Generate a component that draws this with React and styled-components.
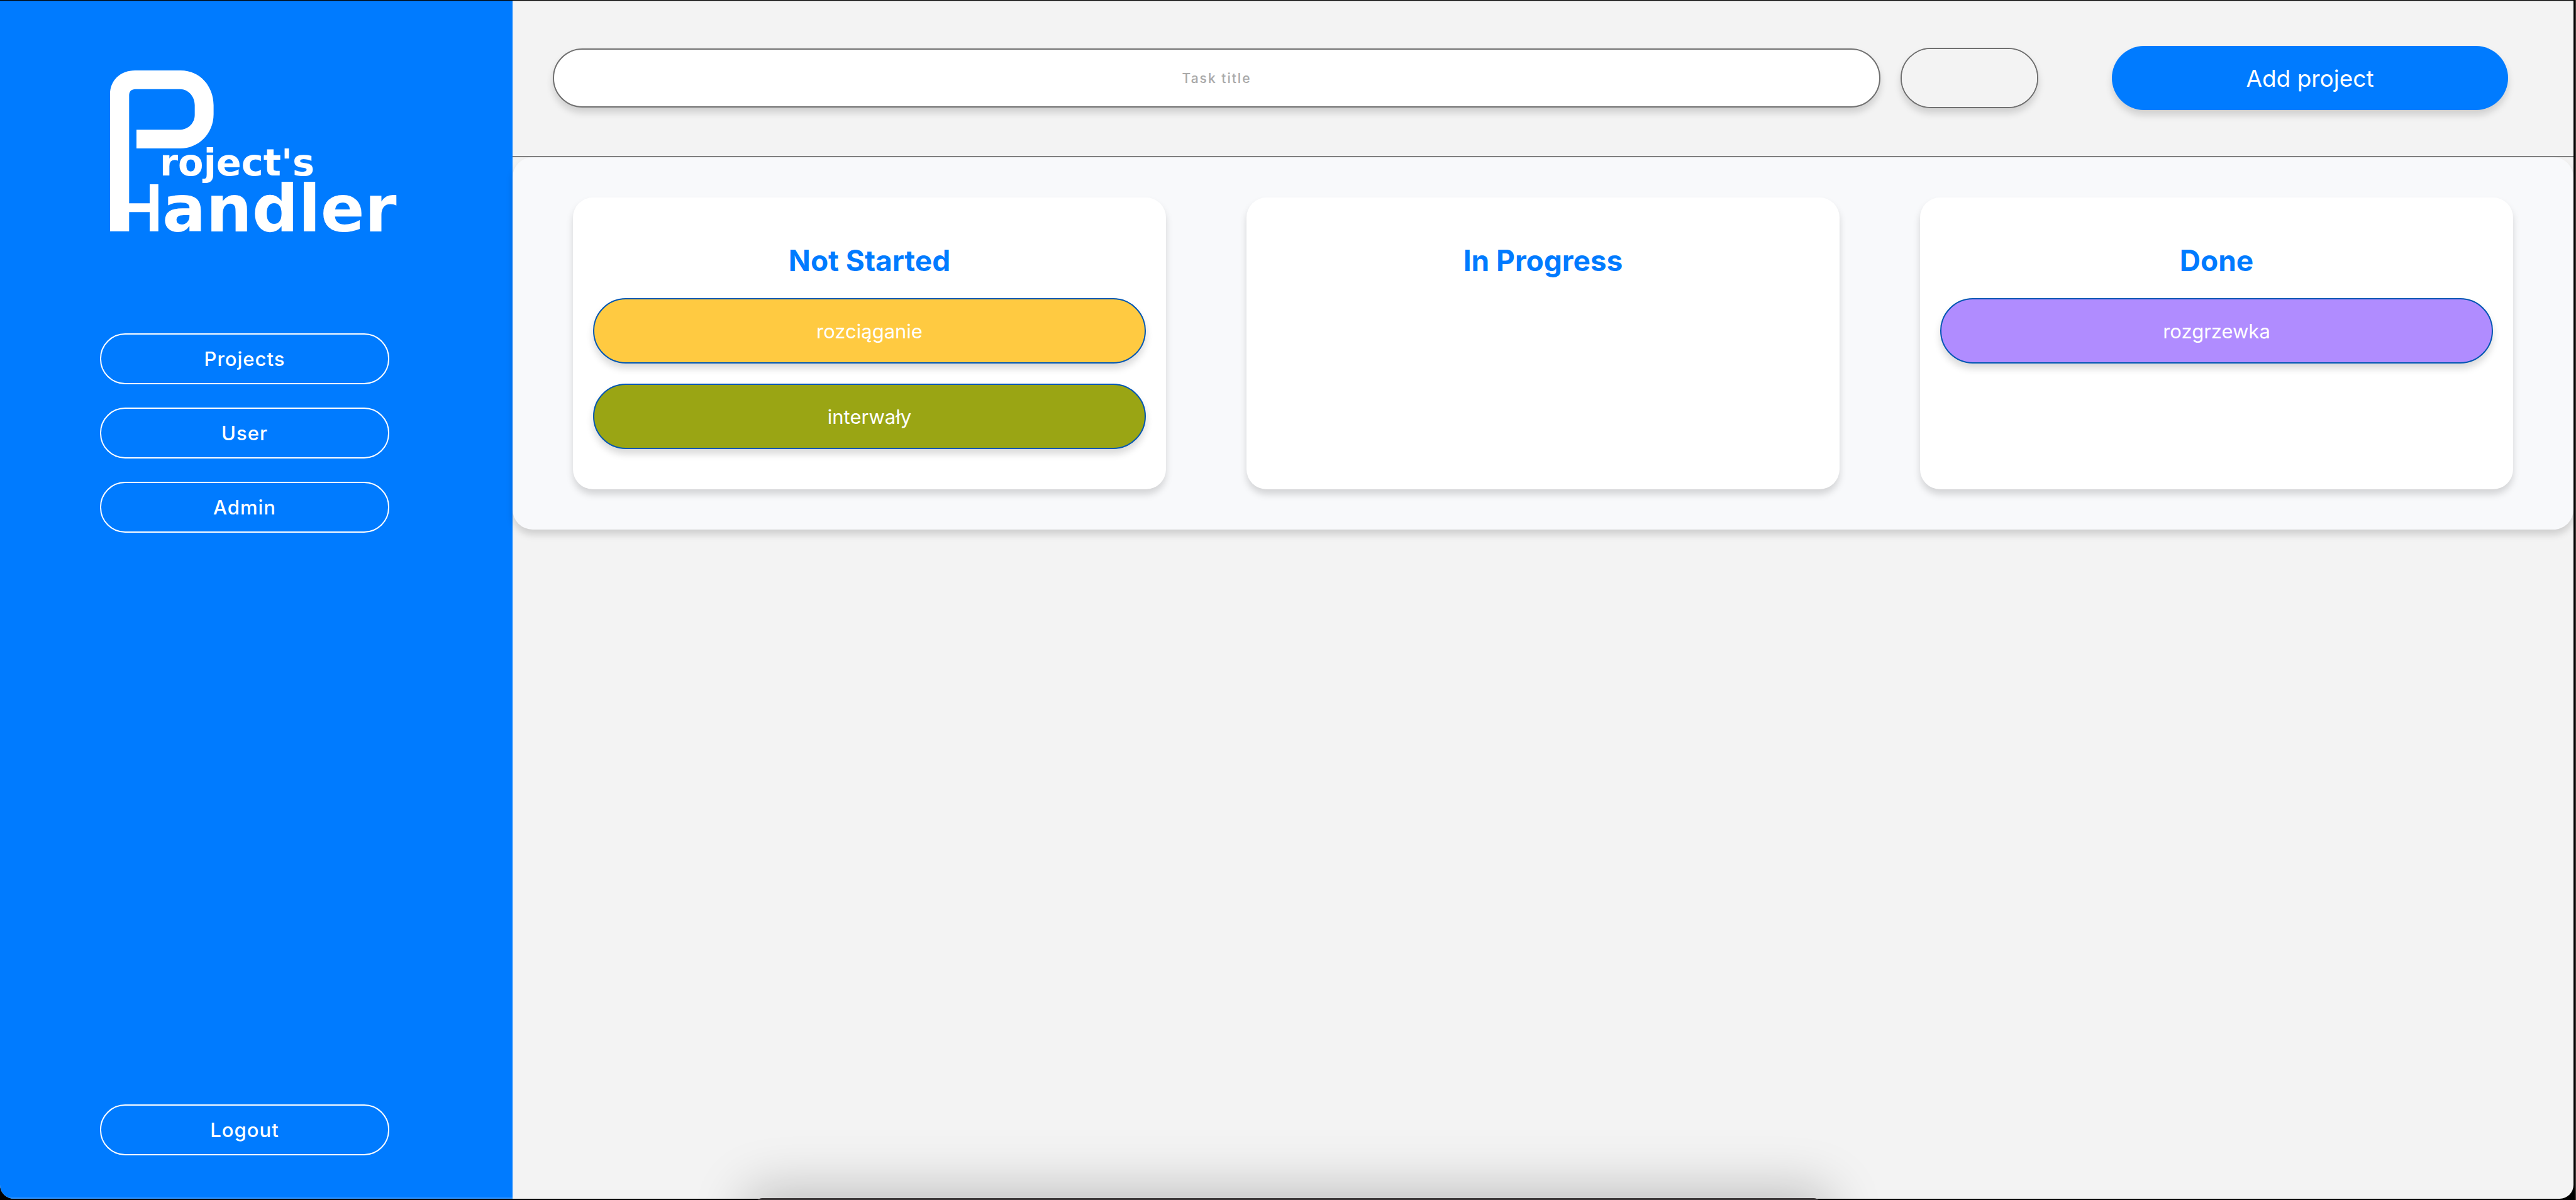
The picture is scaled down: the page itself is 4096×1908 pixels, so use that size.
import React from "react";
import styled, { createGlobalStyle } from "styled-components";

const blue = "#007bff";
const softShadow = "0 8px 12px rgba(0, 0, 0, 0.15)";

const GlobalStyle = createGlobalStyle`
  *, *::before, *::after { box-sizing: border-box; }
  body {
    margin: 0;
    background: #000;
    font-family: Inter, "Liberation Sans", sans-serif;
    -webkit-font-smoothing: antialiased;
  }
  button, input { font-family: inherit; }
`;

const Desktop = styled.div`
  display: flex;
  min-height: 100vh;
  padding: 1px 4px 2px 0;
  background: #000;
  box-shadow: inset -2px 0 0 #38332f;
  overflow: hidden;
`;

const Window = styled.div`
  display: flex;
  flex: 1;
  min-width: 0;
  border-radius: 0 0 22px 22px;
  background: #f3f3f3;
  overflow: hidden;
`;

const Sidebar = styled.aside`
  display: flex;
  flex: 0 0 815px;
  flex-direction: column;
  justify-content: space-between;
  padding: 110px 176px 67px 159px;
  border-top: 1px solid #005fc4;
  border-bottom: 2px solid #3395ff;
  background: ${blue};
`;

const LogoLink = styled.a`
  display: block;
  margin: 0 0 128px 16px;
  line-height: 0;
`;

const LogoText = styled.text`
  font-family: "DejaVu Sans", sans-serif;
  font-weight: 700;
  font-size: ${({ $size }) => $size}px;
  fill: #fff;
`;

const Nav = styled.nav`
  display: flex;
  flex-direction: column;
  gap: 37px;
`;

const NavButton = styled.button`
  width: 460px;
  height: 81px;
  padding: 0;
  border: 2px solid #fff;
  border-radius: 40px;
  background: transparent;
  color: #fff;
  font-size: 31px;
  font-weight: 500;
  letter-spacing: 1px;
  cursor: pointer;
`;

const Main = styled.main`
  flex: 1;
  min-width: 0;
  border-top: 1px solid #b0b0b0;
`;

const Toolbar = styled.form`
  display: flex;
  align-items: center;
  height: 248px;
  padding: 0 104px 2px 64px;
  border-bottom: 2px solid #7f7f7f;
`;

const TitleInput = styled.input`
  flex: 1;
  min-width: 0;
  height: 94px;
  margin-right: 32px;
  padding: 0 32px;
  border: 2px solid #707070;
  border-radius: 47px;
  background: #fff;
  box-shadow: ${softShadow};
  color: #333;
  font-size: 21px;
  font-weight: 500;
  letter-spacing: 2px;
  text-align: center;
  &::placeholder { color: #a9a9a9; opacity: 1; }
`;

const ColorInput = styled.input`
  appearance: none;
  width: 219px;
  height: 96px;
  margin-right: 117px;
  padding: 0;
  border: 2px solid #707070;
  border-radius: 48px;
  background: #f3f3f3;
  box-shadow: ${softShadow};
  overflow: hidden;
  &::-webkit-color-swatch-wrapper { padding: 0; }
  &::-webkit-color-swatch { border: 0; }
`;

const AddButton = styled.button`
  width: 630px;
  height: 102px;
  padding: 0;
  border: 0;
  border-radius: 51px;
  background: ${blue};
  box-shadow: ${softShadow};
  color: #fff;
  font-size: 37px;
  cursor: pointer;
`;

const Board = styled.section`
  display: flex;
  gap: 128px;
  padding: 64px 96px;
  border-radius: 32px;
  background: #f8f9fb;
  box-shadow: ${softShadow};
`;

const Column = styled.section`
  display: flex;
  flex: 1 1 0;
  flex-direction: column;
  min-width: 0;
  padding: 64px 32px;
  border-radius: 32px;
  background: #fff;
  box-shadow: ${softShadow};
`;

const ColumnTitle = styled.h2`
  margin: 0 0 24px;
  color: ${blue};
  font-size: 46px;
  font-weight: 700;
  line-height: 72px;
  text-align: center;
`;

const TaskList = styled.div`
  display: flex;
  flex-direction: column;
  gap: 32px;
`;

const TaskButton = styled.button`
  height: 104px;
  padding: 0;
  border: 2px solid #0056b3;
  border-radius: 52px;
  background: ${({ $color }) => $color};
  box-shadow: ${softShadow};
  color: #fff;
  font-size: 31px;
  cursor: pointer;
`;

const Dock = styled.div`
  position: fixed;
  bottom: -157px;
  left: 29.3%;
  right: 29.3%;
  height: 160px;
  border-radius: 12px;
  background: #3a3637;
  box-shadow: 0 0 84px 14px rgba(0, 0, 0, 0.22);
  pointer-events: none;
`;

const columns = [
  {
    title: "Not Started",
    tasks: [
      { name: "rozciąganie", color: "#ffca41" },
      { name: "interwały", color: "#9aa514" },
    ],
  },
  { title: "In Progress", tasks: [] },
  { title: "Done", tasks: [{ name: "rozgrzewka", color: "#b08cff" }] },
];

function Logo() {
  return (
    <svg width="464" height="290" viewBox="0 0 464 290" role="img" aria-label="Project's Handler">
      {/* Linked monogram: tall rounded loop with a crossbar and a short post */}
      <g transform="scale(0.3444 0.3333) translate(-102 -96)">
        <path
          fill="#fff"
          d="M102 863V210C102 142 150 96 218 96H428C518 96 580 172 580 262V305C580 396 512 468 425 468H224V379H420C464 379 493 346 493 308V262C493 220 464 185 425 185H220C200 185 190 195 190 215V730H285V639H325V863H285V772H190V863Z"
        />
      </g>
      <LogoText $size={59} x="79" y="167">roject's</LogoText>
      <LogoText $size={103} x="83" y="256">andler</LogoText>
    </svg>
  );
}

export default function App() {
  return (
    <>
      <GlobalStyle />
      <Desktop>
        <Window>
          <Sidebar>
            <div>
              <LogoLink href="#">
                <Logo />
              </LogoLink>
              <Nav>
                <NavButton type="button">Projects</NavButton>
                <NavButton type="button">User</NavButton>
                <NavButton type="button">Admin</NavButton>
              </Nav>
            </div>
            <NavButton type="button">Logout</NavButton>
          </Sidebar>
          <Main>
            <Toolbar onSubmit={(e) => e.preventDefault()}>
              <TitleInput type="text" placeholder="Task title" aria-label="Task title" />
              <ColorInput type="color" defaultValue="#f3f3f3" aria-label="Task color" />
              <AddButton type="submit">Add project</AddButton>
            </Toolbar>
            <Board>
              {columns.map((column) => (
                <Column key={column.title}>
                  <ColumnTitle>{column.title}</ColumnTitle>
                  <TaskList>
                    {column.tasks.map((task) => (
                      <TaskButton key={task.name} type="button" $color={task.color}>
                        {task.name}
                      </TaskButton>
                    ))}
                  </TaskList>
                </Column>
              ))}
            </Board>
          </Main>
        </Window>
        <Dock />
      </Desktop>
    </>
  );
}
